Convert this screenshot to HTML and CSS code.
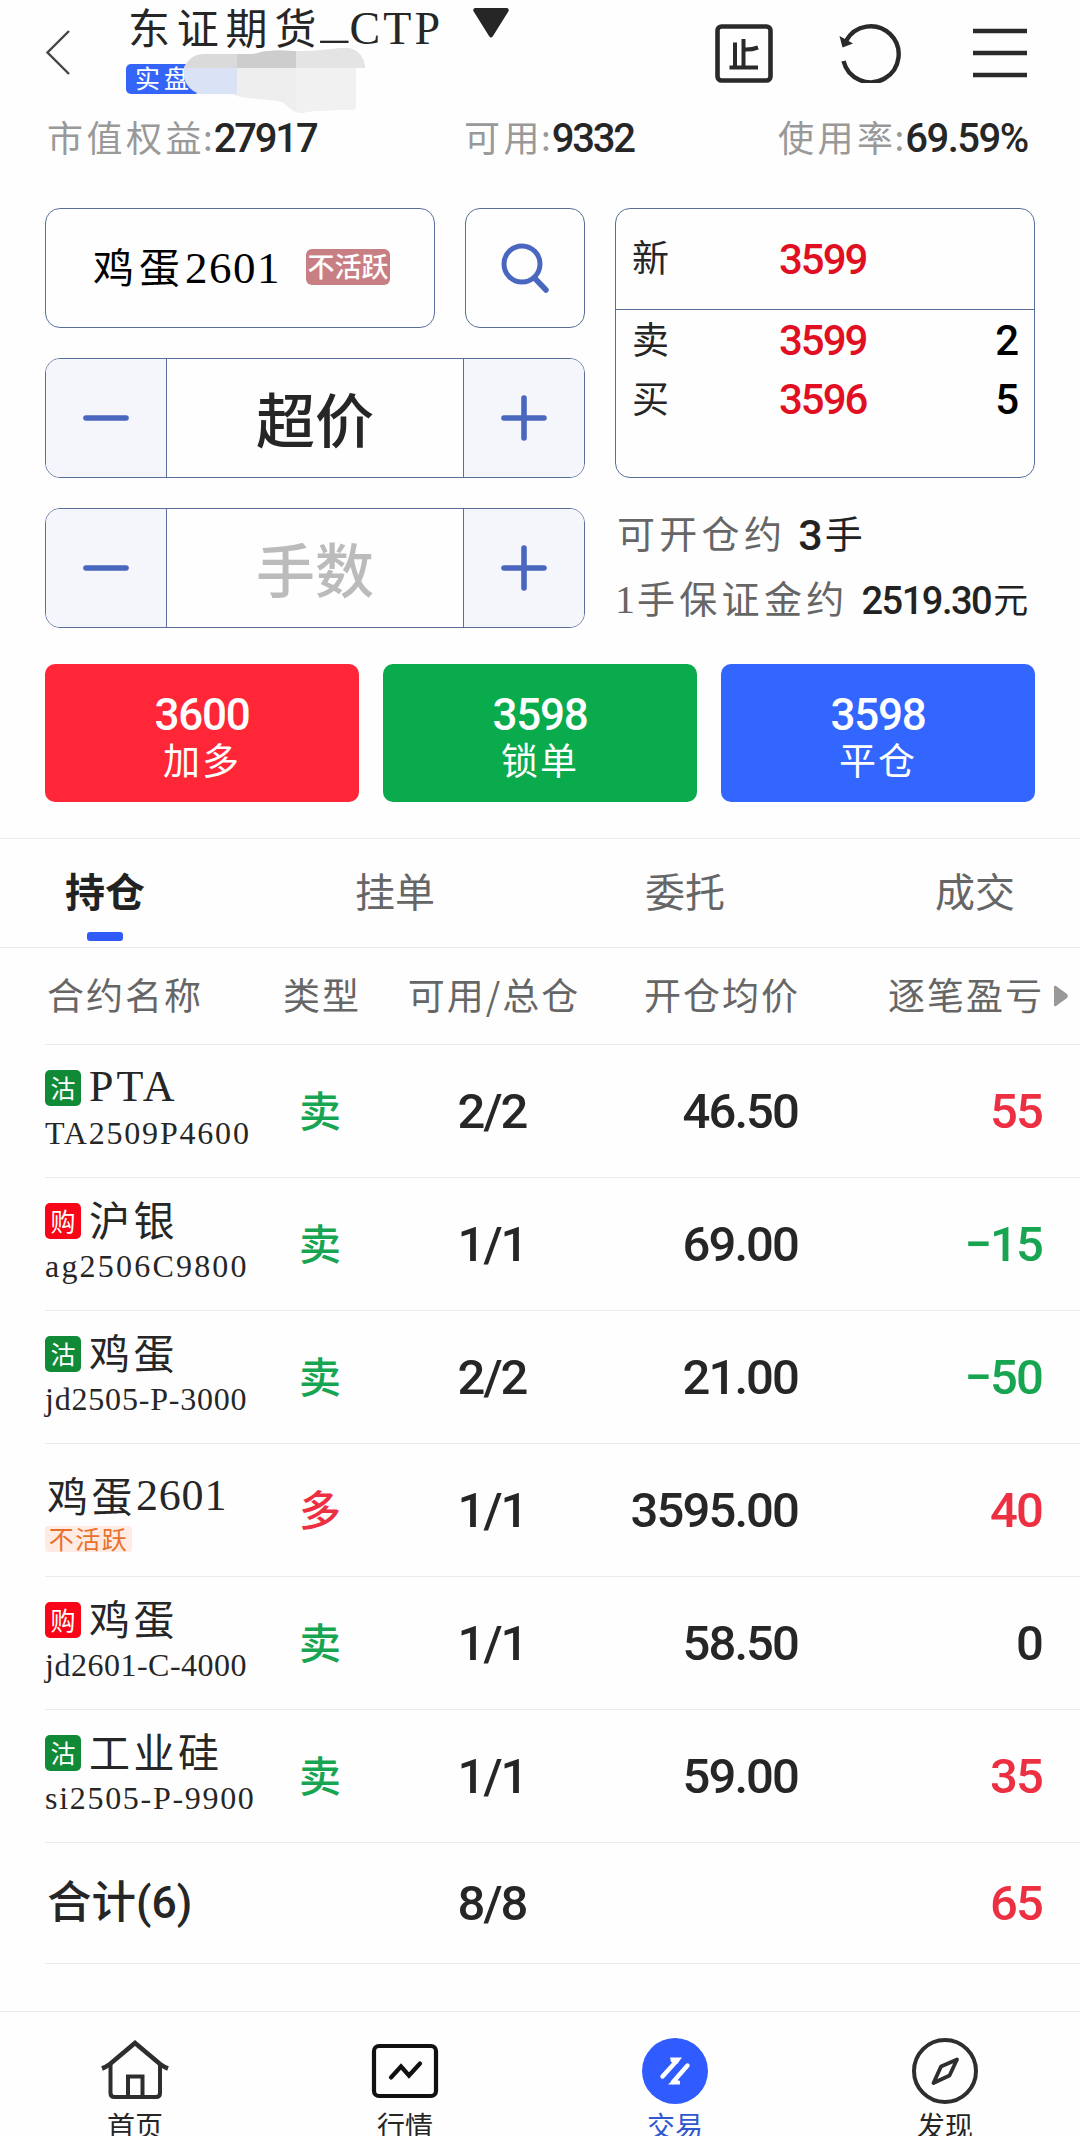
FILE: index.html
```html
<!DOCTYPE html>
<html lang="zh-CN">
<head>
<meta charset="utf-8">
<title>交易</title>
<link rel="stylesheet" href="styles.css">
</head>
<body>
<div class="app">
  <header class="topbar">
    <svg class="back" width="30" height="50" viewBox="0 0 30 50"><path d="M26 4 4.500 25.500 26 47" fill="none" stroke="#444" stroke-width="2.400"/></svg>
    <div class="account">
      <div class="account-row">
        <span class="account-name">东证期货<span class="latin"><span class="underscore">_</span>CTP</span></span>
        <svg class="caret" width="36" height="30" viewBox="0 0 36 30"><path d="M2 0H34Q37 1 35 4L20 28Q18 31 16 28L1 4Q-1 1 2 0Z" fill="#262626"/></svg>
      </div>
      <span class="live-tag">实盘</span>
      <svg class="smudge" width="184" height="70" viewBox="0 0 184 70">
        <path d="M0 19Q7 6 20 6H70C80 2 95 2 110 3C135 4 150 0 163 0C175 1 180 10 181 20H0Z" fill="#dadada"/>
        <path d="M53 6H70C80 2 95 2 112 3V20H53Z" fill="#cdcdcd"/>
        <path d="M112 3C135 4 150 0 163 0C175 1 180 10 181 20H112Z" fill="#e4e4e4"/>
        <path d="M0 20H53V46H15Q3 41 0 30Z" fill="#dae3f5"/>
        <path d="M53 20H172V58Q172 62 168 62C150 62 130 62 118 65C108 65 104 58 98 54C80 50 60 52 48 46L53 46Z" fill="#eee"/>
        <path d="M112 20H172V58Q172 62 168 62C150 62 130 62 118 65L112 63Z" fill="#f1f1f1"/>
      </svg>
    </div>
    <div class="tools">
      <svg width="58" height="59" viewBox="0 0 58 59" fill="none" stroke="#2a2a2a"><rect x="2.500" y="2.500" width="53" height="54" rx="4" stroke-width="4.600"/><path d="M14.500 43.500H43M20 18.500V43M28.500 15V43M28.500 25.500Q36 26 43 23.500" stroke-width="4"/></svg>
      <svg width="62" height="60" viewBox="0 0 62 60"><path d="M4.500 38A28 28 0 1 0 7 18" fill="none" stroke="#2a2a2a" stroke-width="4.400"/><path d="M.500 13 14 20.500 3.500 24.500Z" fill="#2a2a2a"/></svg>
      <svg width="54" height="50" viewBox="0 0 54 50"><path d="M0 3H54M0 25H54M0 47H54" stroke="#2a2a2a" stroke-width="4.600"/></svg>
    </div>
  </header>

  <section class="funds">
    <div><span class="label">市值权益</span><i>:</i><b>27917</b></div>
    <div><span class="label">可用</span><i>:</i><b>9332</b></div>
    <div class="usage"><span class="label">使用率</span><i>:</i><b>69.59%</b></div>
  </section>

  <section class="order">
    <div class="inputs">
      <div class="pick">
        <div class="box symbol"><span class="symbol-name">鸡蛋<span class="latin">2601</span></span><span class="idle">不活跃</span></div>
        <div class="box search"><svg width="50" height="52" viewBox="0 0 50 52" fill="none" stroke="#4a67bf"><circle cx="22" cy="22" r="18" stroke-width="5"/><path d="M34.500 36 46 48" stroke-width="5.500" stroke-linecap="round"/></svg></div>
      </div>
      <div class="box stepper">
        <span class="step"><svg width="46" height="46" viewBox="0 0 46 46"><path d="M3 23H43" stroke="#4a67bf" stroke-width="5.600" stroke-linecap="round"/></svg></span>
        <span class="value">超价</span>
        <span class="step"><svg width="46" height="46" viewBox="0 0 46 46"><path d="M3 23H43M23 3V43" stroke="#4a67bf" stroke-width="5.600" stroke-linecap="round"/></svg></span>
      </div>
      <div class="box stepper">
        <span class="step"><svg width="46" height="46" viewBox="0 0 46 46"><path d="M3 23H43" stroke="#4a67bf" stroke-width="5.600" stroke-linecap="round"/></svg></span>
        <span class="value hint">手数</span>
        <span class="step"><svg width="46" height="46" viewBox="0 0 46 46"><path d="M3 23H43M23 3V43" stroke="#4a67bf" stroke-width="5.600" stroke-linecap="round"/></svg></span>
      </div>
    </div>
    <div class="market">
      <div class="box quotes">
        <div class="quote last"><span>新</span><b>3599</b></div>
        <div class="quote ask"><span>卖</span><b>3599</b><em>2</em></div>
        <div class="quote bid"><span>买</span><b>3596</b><em>5</em></div>
      </div>
      <p class="info open"><span class="text">可开仓约</span><b>3</b><span class="unit">手</span></p>
      <p class="info margin"><span class="text"><span class="latin">1</span>手保证金约</span><b>2519.30</b><span class="unit">元</span></p>
    </div>
  </section>

  <section class="actions">
    <div class="action red"><b>3600</b><span>加多</span></div>
    <div class="action green"><b>3598</b><span>锁单</span></div>
    <div class="action blue"><b>3598</b><span>平仓</span></div>
  </section>

  <nav class="tabs">
    <span class="tab active">持仓</span><span class="tab">挂单</span><span class="tab">委托</span><span class="tab">成交</span>
  </nav>

  <section class="positions">
    <div class="row head">
      <span>合约名称</span><span>类型</span><span>可用/总仓</span><span>开仓均价</span><span>逐笔盈亏</span>
      <svg width="14" height="22" viewBox="0 0 14 22"><path d="M0 2Q0 0 2 1L13 9Q14.500 11 13 13L2 21Q0 22 0 20Z" fill="#999"/></svg>
    </div>
    <div class="row">
      <div class="name"><div class="title"><span class="chip put">沽</span><span class="latin">PTA</span></div><div class="code c1">TA2509P4600</div></div>
      <span class="side sell">卖</span><span class="num">2/2</span><span class="num">46.50</span><span class="num up">55</span>
    </div>
    <div class="row">
      <div class="name"><div class="title"><span class="chip call">购</span><span>沪银</span></div><div class="code c2">ag2506C9800</div></div>
      <span class="side sell">卖</span><span class="num">1/1</span><span class="num">69.00</span><span class="num down">−15</span>
    </div>
    <div class="row">
      <div class="name"><div class="title"><span class="chip put">沽</span><span>鸡蛋</span></div><div class="code c3">jd2505-P-3000</div></div>
      <span class="side sell">卖</span><span class="num">2/2</span><span class="num">21.00</span><span class="num down">−50</span>
    </div>
    <div class="row">
      <div class="name plain"><div class="title"><span>鸡蛋</span><span class="latin">2601</span></div><span class="inactive">不活跃</span></div>
      <span class="side buy">多</span><span class="num">1/1</span><span class="num">3595.00</span><span class="num up">40</span>
    </div>
    <div class="row">
      <div class="name"><div class="title"><span class="chip call">购</span><span>鸡蛋</span></div><div class="code c4">jd2601-C-4000</div></div>
      <span class="side sell">卖</span><span class="num">1/1</span><span class="num">58.50</span><span class="num">0</span>
    </div>
    <div class="row">
      <div class="name"><div class="title"><span class="chip put">沽</span><span>工业硅</span></div><div class="code c5">si2505-P-9900</div></div>
      <span class="side sell">卖</span><span class="num">1/1</span><span class="num">59.00</span><span class="num up">35</span>
    </div>
    <div class="row total">
      <span class="sum">合计(6)</span><span></span><span class="num">8/8</span><span></span><span class="num up">65</span>
    </div>
  </section>

  <nav class="bottom">
    <div class="item"><svg width="70" height="66" viewBox="0 0 70 66" fill="none" stroke="#2e2e2e" stroke-width="4"><path d="M2 30.500 Q6 29 10 26L35 5 60 26Q64 29 68 30.500" stroke-width="4.600"/><path d="M10.500 26V55Q10.500 59 14.500 59H56Q60 59 60 55V26M28 59V38.500H42.500V59"/></svg><span>首页</span></div>
    <div class="item"><svg width="70" height="66" viewBox="0 0 70 66" fill="none" stroke="#111" stroke-width="4.200"><rect x="4" y="8" width="62" height="50" rx="5"/><path d="M21 39.500 31 28.500 39 37.500 50 25.500" stroke-linecap="round"/></svg><span>行情</span></div>
    <div class="item current"><svg width="70" height="66" viewBox="0 0 70 66"><circle cx="35" cy="33" r="33" fill="#2f5bff"/><path d="M22.500 38.500 37 22.500M47.500 27.500 33 44" stroke="#fff" stroke-width="4.400" stroke-linecap="round"/><path d="M30 19.500H42L37 26 31 24ZM28 46.500H40V43L34 41Z" fill="#fff"/></svg><span>交易</span></div>
    <div class="item"><svg width="70" height="66" viewBox="0 0 70 66" fill="none" stroke="#2e2e2e"><circle cx="35" cy="33" r="31" stroke-width="4"/><path d="M47 21.500 31 28.500 23.500 45 39.500 37.500Z" stroke-width="3.800" stroke-linejoin="round"/></svg><span>发现</span></div>
  </nav>
</div>
</body>
</html>
```
FILE: styles.css
```css
* { box-sizing: border-box; }
html, body { margin: 0; }
body { width: 1080px; height: 2136px; overflow: hidden; background: #fefefe; color: #262626; font-family: "Noto Sans CJK SC", sans-serif; font-weight: 400; }
.app { height: 2136px; overflow: hidden; display: flex; flex-direction: column; }
svg { display: block; flex: none; }
b, em, .num { font-family: Roboto, "Noto Sans CJK SC", sans-serif; font-weight: 500; font-style: normal; }
.latin { font-family: "Liberation Serif", serif; }

.topbar { height: 112px; flex: none; display: flex; align-items: flex-start; padding: 0 53px 0 43px; }
.back { margin-top: 27px; }
.account { position: relative; margin-left: 55px; flex: 1; }
.account-row { display: flex; align-items: flex-start; height: 60px; }
.account-name { font-size: 42px; line-height: 52px; letter-spacing: 6.800px; white-space: nowrap; }
.account-name .latin { font-size: 46px; letter-spacing: 3.200px; }
.underscore { display: inline-block; transform: translateY(-7px) scaleX(1.200); }
.caret { margin: 8px 0 0 30px; }
.live-tag { display: block; width: 74px; height: 30px; margin: 4px 0 0 -2px; padding-left: 9px; border-radius: 5px; background: #3465f8; color: #fff; font-size: 25px; line-height: 27px; letter-spacing: 4px; white-space: nowrap; }
.smudge { position: absolute; left: 56px; top: 48px; }
.tools { display: flex; align-items: center; padding-top: 23px; }
.tools svg:nth-child(2) { margin: 0 72px 0 66px; }

.funds { height: 96px; flex: none; display: grid; grid-template-columns: 417px 314px 1fr; padding: 5px 0 0 47px; line-height: 44px; white-space: nowrap; }
.funds div { display: flex; align-items: center; height: 44px; }
.funds .label { color: #999; font-size: 36px; letter-spacing: 3.500px; margin-top: -6px; }
.funds i { color: #999; font-style: normal; font-size: 35px; margin: -6px 1px 0 -2px; }
.funds b { font-size: 40px; letter-spacing: -2.200px; }
.funds .usage b { letter-spacing: -1.500px; }

.order { display: flex; gap: 30px; padding: 0 45px; height: 420px; flex: none; }
.box { border: 1px solid #596f99; border-radius: 15px; }
.inputs { width: 540px; display: flex; flex-direction: column; gap: 30px; }
.pick { display: flex; gap: 30px; }
.symbol { width: 390px; height: 120px; display: flex; align-items: center; padding: 0 0 4px 47px; color: #000; }
.symbol-name { font-size: 41px; letter-spacing: 5px; line-height: 60px; white-space: nowrap; }
.symbol-name .latin { font-size: 45px; letter-spacing: 1.500px; }
.idle { margin: 2px 0 0 25px; width: 84px; height: 36px; border-radius: 6px; background: #c87f84; color: #fff; font-size: 27px; line-height: 33px; font-weight: 500; text-align: center; }
.search { width: 120px; height: 120px; display: flex; align-items: center; justify-content: center; }
.stepper { height: 120px; display: flex; overflow: hidden; }
.step { width: 120px; background: #f4f6fb; display: flex; align-items: center; justify-content: center; }
.value { flex: 1; border: solid #596f99; border-width: 0 1px; text-align: center; font-size: 59px; font-weight: 500; line-height: 117px; height: 118px; overflow: hidden; }
.hint { color: #bbb; }
.market { width: 420px; }
.quotes { height: 270px; }
.quote { display: grid; grid-template-columns: 147px 1fr auto; align-items: center; padding: 0 15px 0 16px; }
.quote span { font-size: 37px; line-height: 44px; margin-top: -6px; }
.quote b { color: #e10f22; font-size: 42px; letter-spacing: -2px; }
.quote em { color: #000; font-size: 42px; }
.last { height: 101px; border-bottom: 1px solid #596f99; }
.ask { height: 59px; margin-top: 1px; }
.bid { height: 59px; }
.info { margin: 0; display: flex; align-items: center; height: 60px; white-space: nowrap; color: #666; font-size: 38px; letter-spacing: 4.300px; }
.info b, .unit { color: #222; }
.text, .unit { line-height: 50px; margin-top: -6px; }
.open { margin-top: 27px; padding-left: 2px; }
.open b { font-size: 43px; letter-spacing: 0; margin-left: 12px; }
.unit { margin-left: 2px; letter-spacing: 0; }
.margin { margin-top: 6px; }
.margin .latin { font-size: 40px; letter-spacing: 2px; }
.margin b { font-size: 38px; letter-spacing: -1.500px; margin-left: 13px; }
.margin .unit { font-size: 35px; }

.actions { display: flex; gap: 24px; padding: 36px 45px; height: 210px; flex: none; }
.action { flex: 1; height: 138px; border-radius: 10px; color: #fff; display: flex; flex-direction: column; align-items: center; padding-top: 28px; }
.action b { font-size: 44px; line-height: 47px; letter-spacing: -1.200px; }
.action span { font-size: 37px; line-height: 40px; letter-spacing: 2px; }
.red { background: #ff2737; }
.green { background: #0aab4c; }
.blue { background: #3366ff; }

.tabs { height: 110px; flex: none; border: solid #eaeaea; border-width: 1px 0; display: flex; justify-content: space-between; padding: 0 65px 0 65px; }
.tab { display: flex; flex-direction: column; align-items: center; font-size: 40px; line-height: 102px; height: 108px; color: #666; }
.active { color: #222; font-weight: 700; }
.active::after { content: ""; width: 36px; height: 9px; margin-top: -9px; border-radius: 3px; background: #305bf8; }

.positions { padding-left: 45px; flex: none; }
.row { height: 133px; border-bottom: 1px solid #eaeaea; display: grid; grid-template-columns: 235px 80px 264px 174px 244px 1fr; align-items: center; }
.head { height: 97px; color: #666; font-size: 37px; letter-spacing: 2px; white-space: nowrap; }
.head span { line-height: 50px; margin: -5px -2px 0 2px; }
.head svg { margin-left: 12px; }
.row > :nth-child(2), .row > :nth-child(3) { text-align: center; justify-self: center; }
.row > :nth-child(4), .row > :nth-child(5) { text-align: right; justify-self: end; }
.name { height: 132px; padding-top: 17px; white-space: nowrap; }
.title { display: flex; align-items: center; height: 50px; font-size: 41px; letter-spacing: 3.500px; }
.title span { line-height: 44px; margin-top: -5px; }
.title .latin { font-size: 44px; letter-spacing: 3px; margin-top: 0; }
.title .chip { width: 36px; height: 36px; margin: 2px 8px 0 0; border-radius: 5px; color: #fff; font-size: 25px; line-height: 34px; text-align: center; letter-spacing: 0; }
.put { background: #118a38; }
.call { background: #f80517; }
.code { font-family: "Liberation Serif", serif; font-size: 32px; line-height: 42px; }
.c1 { letter-spacing: 1.800px; }
.c2 { letter-spacing: 2.200px; }
.c3 { letter-spacing: .800px; }
.c4 { letter-spacing: .500px; }
.c5 { letter-spacing: 1.700px; }
.plain { padding: 27px 0 0 2px; }
.plain .latin { letter-spacing: .800px; }
.inactive { display: block; width: 87px; height: 26px; margin: 5px 0 0 -2px; background: #ffebe3; color: #e8722c; font-size: 25px; line-height: 24px; letter-spacing: 1.500px; text-align: center; border-radius: 3px; }
.side { font-size: 42px; line-height: 50px; font-weight: 500; margin-top: -5px; }
.num { font-size: 49px; letter-spacing: -1.900px; }
.sell, .down { color: #18a552; }
.buy, .up { color: #ec3042; }
.total { height: 121px; }
.sum { font-family: Roboto, "Noto Sans CJK SC", sans-serif; font-size: 44.500px; line-height: 54px; font-weight: 500; margin: -1px 0 0 2px; }

.bottom { flex: none; height: 140px; margin-top: 47px; border-top: 1px solid #eaeaea; display: flex; padding-top: 26px; }
.item { flex: 1; display: flex; flex-direction: column; align-items: center; font-size: 28px; line-height: 34px; }
.item span { margin-top: 4px; }
.current { color: #3057d0; }
```
